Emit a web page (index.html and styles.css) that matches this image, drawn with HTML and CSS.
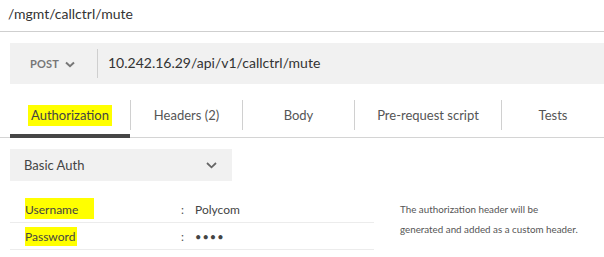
FILE: index.html
```html
<!DOCTYPE html>
<html>
<head>
<meta charset="utf-8">
<link rel="stylesheet" href="styles.css">
</head>
<body>
<div class="title">/mgmt/callctrl/mute</div>
<div class="urlbar">
  <div class="method">POST <svg class="chev" width="10" height="7" viewBox="0 0 10 7"><path d="M1 1.5 L5 5.2 L9 1.5" fill="none" stroke="#777" stroke-width="2"/></svg></div>
  <div class="url">10.242.16.29/api/v1/callctrl/mute</div>
</div>
<div class="tabs">
  <div class="tab active w1"><div class="tab-label"><span class="hl">Authorization</span></div></div>
  <div class="tab w2"><div class="tab-label sep">Headers (2)</div></div>
  <div class="tab w2"><div class="tab-label sep">Body</div></div>
  <div class="tab w3"><div class="tab-label sep">Pre-request script</div></div>
  <div class="tab w4"><div class="tab-label sep">Tests</div></div>
</div>
<div class="select">
  <span>Basic Auth</span>
  <svg class="chev2" width="11" height="7" viewBox="0 0 11 7"><path d="M1 1 L5.5 5.3 L10 1" fill="none" stroke="#666" stroke-width="1.8"/></svg>
</div>
<div class="auth">
  <div class="fields">
    <div class="row"><div class="label"><span class="hl hl-user">Username</span></div><div class="colon">:</div><div class="value">Polycom</div></div>
    <div class="row"><div class="label"><span class="hl hl-pass">Password</span></div><div class="colon">:</div><div class="value dots">&#8226;&#8226;&#8226;&#8226;</div></div>
  </div>
  <div class="help">The authorization header will be<br>generated and added as a custom header.</div>
</div>
</body>
</html>
```
FILE: styles.css
```css
html, body { margin: 0; padding: 0; background: #fff; }
body { font-family: Lato, "Open Sans", sans-serif; color: #333; width: 604px; height: 257px; overflow: hidden; }
.title { height: 31px; border-bottom: 1px solid #cfcfcf; padding-left: 8px; font-size: 14px; line-height: 28px; color: #333; }
.urlbar { margin: 11px 0 0 10px; height: 41px; background: #f1f1f1; display: flex; align-items: center; }
.method { width: 87px; box-sizing: border-box; padding-left: 20px; font-size: 11px; font-weight: 700; color: #777; display: flex; align-items: center; gap: 6px; letter-spacing: 0.2px; }
.chev { margin-top: 1px; }
.url { border-left: 1px solid #cfcfcf; height: 29px; line-height: 28px; padding-left: 10px; font-size: 14px; color: #333; }
.tabs { margin-top: 16px; display: flex; border-bottom: 1px solid #d4d4d4; padding-left: 10px; }
.tab { height: 34px; box-sizing: border-box; }
.tab.active { border-bottom: 4px solid #464646; margin-bottom: -1px; height: 38px; }
.w1 { width: 120px; } .w2 { width: 112px; } .w3 { width: 147px; } .w4 { width: 103px; }
.tab-label { height: 30px; display: flex; align-items: center; justify-content: center; font-size: 13px; color: #555; box-sizing: border-box; }
.tab-label.sep { border-left: 1px solid #d0d0d0; }
.hl { background: #ffff00; }
.tab-label .hl { padding: 2px 3px 3px 3px; color: #444; }
.select { margin: 11px 0 0 10px; width: 222px; height: 32px; background: #f1f1f1; display: flex; align-items: center; justify-content: space-between; padding: 0 15px 0 14px; box-sizing: border-box; font-size: 13px; color: #444; }
.chev2 { margin-top: 1px; }
.auth { display: flex; margin-top: 15px; margin-left: 10px; }
.fields { width: 364px; }
.row { height: 26px; border-bottom: 1px solid #ececec; display: flex; align-items: center; font-size: 12px; color: #444; }
.label { width: 171px; padding-left: 15px; box-sizing: border-box; }
.colon { width: 14px; color: #555; }
.value { color: #444; }
.dots { font-size: 11px; letter-spacing: 1px; }
.hl-user { padding: 4px 16px 2px 0; }
.hl-pass { padding: 2px 2px 2px 0; }
.help { margin-left: 26px; margin-top: 3px; font-size: 9.8px; line-height: 20px; color: #555; }
```
